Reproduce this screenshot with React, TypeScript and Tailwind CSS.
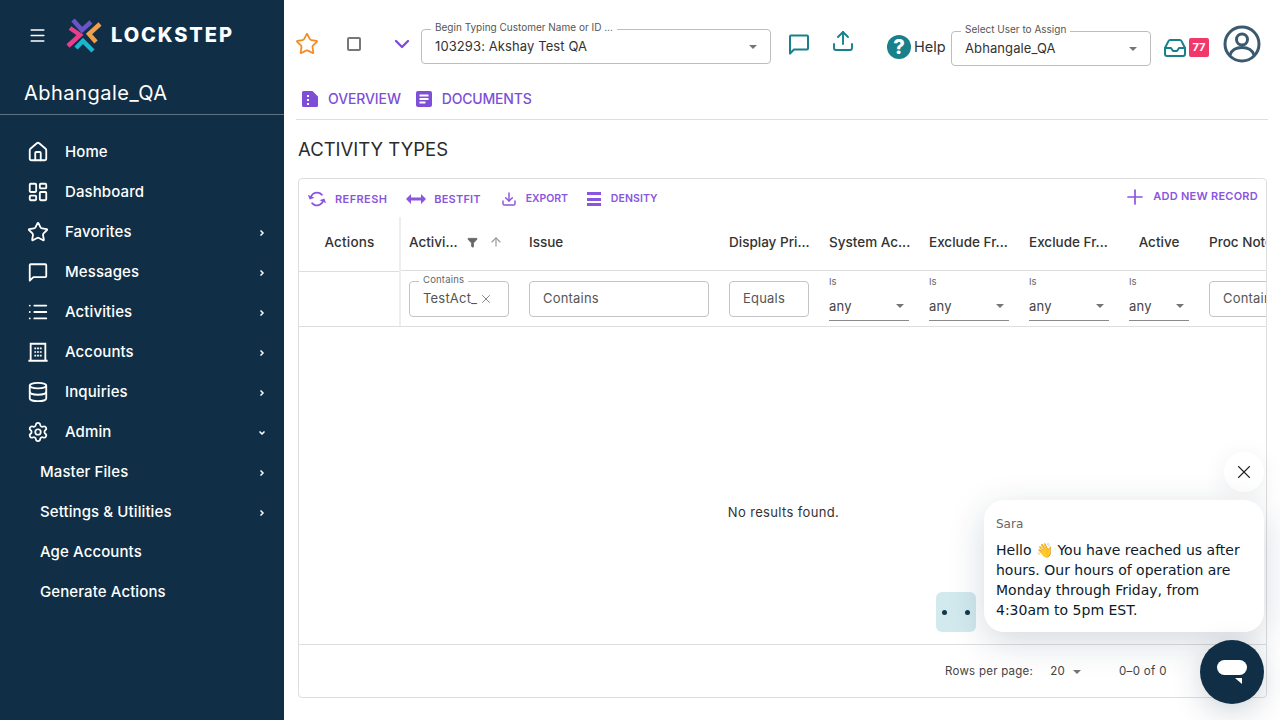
import {
  ArrowUp,
  ChevronDown,
  ChevronRight,
  Database,
  Download,
  Filter,
  Home,
  Inbox,
  LayoutDashboard,
  List,
  Menu,
  Plus,
  Settings,
  Star,
  Upload,
  X,
} from 'lucide-react'
import type { ReactNode } from 'react'

const font = '[font-family:Inter,sans-serif]'

function BubbleIcon({ className }: { className?: string }) {
  return (
    <svg viewBox="0 0 24 24" fill="none" stroke="currentColor" strokeWidth="2" className={className}>
      <path d="M3 4.5a1 1 0 0 1 1-1h16a1 1 0 0 1 1 1v12a1 1 0 0 1-1 1H7l-4 4z" strokeLinejoin="round" />
    </svg>
  )
}

function BuildingIcon({ className }: { className?: string }) {
  return (
    <svg viewBox="0 0 24 24" fill="none" stroke="currentColor" strokeWidth="2" className={className}>
      <path d="M1.5 21.5h21M4 21V3h16v18" />
      <path d="M8 8h2M11 8h2M14 8h2M8 12h2M11 12h2M14 12h2M8 16h2M11 16h2M14 16h2" strokeWidth="1.8" />
    </svg>
  )
}

function Logo() {
  return (
    <svg viewBox="0 0 40 40" fill="none" strokeWidth="4.5" className="h-[40px] w-[40px] shrink-0">
      <path d="M9 5 18 15 27 7" stroke="#6a55c8" />
      <path d="M36 9 25 19 32 27" stroke="#f0a04b" />
      <path d="M6 13 16 20 4 31" stroke="#e83e8c" />
      <path d="M12 33 19 26 29 36" stroke="#1cb5d0" />
    </svg>
  )
}

type NavItem = { label: string; icon?: ReactNode; arrow?: 'right' | 'down' }

const navIcon = 'h-[22px] w-[22px]'

const navItems: NavItem[] = [
  { label: 'Home', icon: <Home className={navIcon} strokeWidth={2} /> },
  { label: 'Dashboard', icon: <LayoutDashboard className={navIcon} strokeWidth={2} /> },
  { label: 'Favorites', icon: <Star className={navIcon} strokeWidth={2} />, arrow: 'right' },
  { label: 'Messages', icon: <BubbleIcon className={navIcon} />, arrow: 'right' },
  { label: 'Activities', icon: <List className={navIcon} strokeWidth={2} />, arrow: 'right' },
  { label: 'Accounts', icon: <BuildingIcon className={navIcon} />, arrow: 'right' },
  { label: 'Inquiries', icon: <Database className={navIcon} strokeWidth={2} />, arrow: 'right' },
  { label: 'Admin', icon: <Settings className="h-[24px] w-[24px]" strokeWidth={1.9} />, arrow: 'down' },
  { label: 'Master Files', arrow: 'right' },
  { label: 'Settings & Utilities', arrow: 'right' },
  { label: 'Age Accounts' },
  { label: 'Generate Actions' },
]

function Sidebar() {
  return (
    <aside className="flex h-full w-[284px] shrink-0 flex-col bg-[#102f46] text-white">
      <div className="flex h-[70px] items-center pl-[28px]">
        <Menu className="h-[19px] w-[19px]" strokeWidth={1.8} />
        <div className="ml-[17px]">
          <Logo />
        </div>
        <span className="ml-[7px] text-[20px] font-extrabold tracking-[1.9px]">LOCKSTEP</span>
      </div>
      <div className="flex h-[45px] items-center border-b border-[#5d7282] pl-[24px] pt-[1px] text-[20px] tracking-[0.5px]">
        Abhangale_QA
      </div>
      <nav className="pt-[17px]">
        {navItems.map((item) => (
          <div key={item.label} className="flex h-[40px] items-center pr-[18px]">
            {item.icon ? (
              <>
                <span className="flex w-[65px] justify-center pl-[11px]">
                  <span className="flex w-[22px] justify-center">{item.icon}</span>
                </span>
                <span className="text-[15px] font-medium tracking-[0.1px]">{item.label}</span>
              </>
            ) : (
              <span className="pl-[40px] text-[15px] font-medium tracking-[0.1px]">{item.label}</span>
            )}
            {item.arrow === 'right' && <ChevronRight className="ml-auto mt-[2px] h-[8px] w-[8px]" strokeWidth={5} />}
            {item.arrow === 'down' && <ChevronDown className="ml-auto mt-[2px] h-[8px] w-[8px]" strokeWidth={5} />}
          </div>
        ))}
      </nav>
    </aside>
  )
}

function Caret({ className = '' }: { className?: string }) {
  return <span className={`h-0 w-0 border-x-[4.5px] border-t-[4.5px] border-x-transparent border-t-[#757575] ${className}`} />
}

function OutlinedSelect({ label, value, className }: { label: string; value: string; className: string }) {
  return (
    <div className={`relative flex h-[35px] shrink-0 items-center rounded-[4px] border border-[#bdbdbd] pl-[13px] pr-[13px] ${className}`}>
      <span className="absolute -top-[9px] left-[9px] whitespace-nowrap bg-white px-[4px] text-[10px] leading-[12px] text-[#555]">
        {label}
      </span>
      <span className="text-[13px] tracking-[0.1px] text-[#333]">{value}</span>
      <Caret className="ml-auto" />
    </div>
  )
}

function TopBar() {
  return (
    <div className="flex h-[84px] items-start">
      <Star className="-ml-px mt-[32px] h-[24px] w-[24px] shrink-0 text-[#f28c28]" strokeWidth={1.8} />
      <span className="ml-[28px] mt-[37px] h-[14px] w-[14px] shrink-0 rounded-[2px] border-2 border-[#777]" />
      <ChevronDown className="ml-[29px] mt-[32px] h-[24px] w-[24px] shrink-0 text-[#7e4fd6]" strokeWidth={2.4} />
      <div className="ml-[7px] mt-[29px]">
        <OutlinedSelect label="Begin Typing Customer Name or ID ..." value="103293: Akshay Test QA" className="w-[350px]" />
      </div>
      <BubbleIcon className="ml-[16px] mt-[32px] h-[24px] w-[24px] shrink-0 text-[#17808a]" />
      <Upload className="ml-[20px] mt-[29px] h-[24px] w-[24px] shrink-0 text-[#17808a]" strokeWidth={1.9} />
      <span className="ml-[32px] mt-[35px] flex h-[24px] w-[24px] shrink-0 items-center justify-center rounded-full bg-[#17808a] text-[20px] font-extrabold leading-none text-white">
        ?
      </span>
      <span className="ml-[3px] mt-[37px] w-[31px] text-[14.5px] leading-[20px] text-[#333]">Help</span>
      <div className="ml-[6px] mt-[31px]">
        <OutlinedSelect label="Select User to Assign" value="Abhangale_QA" className="w-[200px]" />
      </div>
      <Inbox className="ml-[12px] mt-[36px] h-[24px] w-[24px] shrink-0 text-[#17808a]" strokeWidth={2} />
      <span className="ml-[2px] mt-[38px] flex h-[19px] w-[20px] shrink-0 items-center justify-center rounded-[2px] bg-[#f0386b] text-[11px] font-bold text-white">
        77
      </span>
      <svg viewBox="0 0 38 38" fill="none" stroke="#3b5a70" strokeWidth="3" className="ml-[14px] mt-[25px] h-[38px] w-[38px] shrink-0">
        <circle cx="19" cy="19" r="17" />
        <circle cx="19" cy="14.5" r="5.5" />
        <path d="M7 30c2-6 7-7.5 12-7.5S29 24 31 30" />
      </svg>
    </div>
  )
}

function Tabs() {
  return (
    <div className="flex h-[36px] items-start border-b border-[#dedede] pl-[6px] pt-[6px] text-[14px] font-medium leading-[18px] text-[#7e4fd6]">
      <svg viewBox="0 0 16 16" className="mt-px h-[16px] w-[16px] shrink-0">
        <path d="M1.500 0H10.500L16 5.500V14.500A1.500 1.500 0 0 1 14.500 16H1.500A1.500 1.500 0 0 1 0 14.500V1.500A1.500 1.500 0 0 1 1.500 0Z" fill="#7e4fd6" />
        <path d="M5 4h2v2H5zM5 8h2v2H5zM5 12h2v2H5z" fill="#fff" />
      </svg>
      <span className="ml-[10px] tracking-[-0.1px]">OVERVIEW</span>
      <svg viewBox="0 0 16 16" className="ml-[15px] mt-px h-[16px] w-[16px] shrink-0">
        <rect width="16" height="16" rx="2" fill="#7e4fd6" />
        <path d="M3.500 3.500h9v2h-9zM3.500 7h9v2h-9zM3.500 10.500h6v2h-6z" fill="#fff" />
      </svg>
      <span className="ml-[10px] tracking-[-0.2px]">DOCUMENTS</span>
    </div>
  )
}

function ToolButton({ icon, label, className = '' }: { icon: ReactNode; label: string; className?: string }) {
  return (
    <div className={`flex items-center font-semibold text-[#8a55e0] ${className}`}>
      {icon}
      <span>{label}</span>
    </div>
  )
}

function Toolbar() {
  return (
    <div className="flex h-[38px] shrink-0 items-center pl-[7px] pr-[8px] pt-[2px]">
      <ToolButton
        className="text-[11px] tracking-[0.4px]"
        icon={
          <svg viewBox="0 0 24 24" fill="#8a55e0" className="mr-[7px] h-[22px] w-[22px] rotate-[25deg]">
            <path d="M19 8l-4 4h3c0 3.310-2.690 6-6 6-1.010 0-1.970-.25-2.800-.7l-1.460 1.460C8.970 19.540 10.430 20 12 20c4.420 0 8-3.580 8-8h3l-4-4zM6 12c0-3.310 2.690-6 6-6 1.010 0 1.970.25 2.800.7l1.460-1.460C15.030 4.460 13.570 4 12 4c-4.420 0-8 3.580-8 8H1l4 4 4-4H6z" />
          </svg>
        }
        label="REFRESH"
      />
      <ToolButton
        className="ml-[19px] text-[11px] tracking-[0.2px]"
        icon={
          <svg viewBox="0 0 20 12" fill="#8a55e0" className="mr-[8px] h-[12px] w-[20px]">
            <path d="M0 6 5 1v3.5h10V1l5 5-5 5V7.500H5V11z" />
          </svg>
        }
        label="BESTFIT"
      />
      <ToolButton
        className="ml-[20px] text-[10.5px] tracking-[-0.1px]"
        icon={<Download className="mr-[9px] h-[16px] w-[16px]" strokeWidth={2.2} />}
        label="EXPORT"
      />
      <ToolButton
        className="ml-[19px] text-[10.5px] tracking-[0.1px]"
        icon={
          <span className="mr-[10px] flex h-[14px] w-[14px] flex-col justify-between">
            <span className="h-[3px] bg-[#8a55e0]" />
            <span className="h-[3px] bg-[#8a55e0]" />
            <span className="h-[3px] bg-[#8a55e0]" />
          </span>
        }
        label="DENSITY"
      />
      <ToolButton
        className="mb-[5px] ml-auto text-[11px] tracking-[0.25px]"
        icon={<Plus className="mr-[6px] h-[24px] w-[24px]" strokeWidth={1.7} />}
        label="ADD NEW RECORD"
      />
    </div>
  )
}

function HeaderCell({ label, className }: { label: string; className: string }) {
  return <div className={`shrink-0 overflow-hidden whitespace-nowrap pl-[10px] ${className}`}>{label}</div>
}

function InputFilter({ value, className }: { value: string; className: string }) {
  return (
    <div className={`mt-[10px] flex h-[36px] shrink-0 items-center overflow-hidden rounded-[4px] border border-[#c4c4c4] pl-[13px] text-[13px] tracking-[0.2px] text-[#555] ${className}`}>
      {value}
    </div>
  )
}

function IsFilter({ className }: { className: string }) {
  return (
    <div className={`ml-[20px] shrink-0 pt-[5px] ${className}`}>
      <div className="text-[9.5px] leading-[12px] text-[#666]">Is</div>
      <div className="mt-[9px] flex h-[24px] items-start border-b border-[#8a8a8a] text-[13px] tracking-[0.2px] text-[#444]">
        <span className="leading-[18px]">any</span>
        <Caret className="ml-auto mr-[5px] mt-[7px]" />
      </div>
    </div>
  )
}

function DataGrid() {
  return (
    <div className="flex min-h-0 flex-1 flex-col overflow-hidden rounded-[4px] border border-[#dedede] text-[#333]">
      <Toolbar />
      <div className="flex h-[110px] shrink-0 border-b border-[#dedede]">
        <div className="w-[102px] shrink-0 border-r-2 border-[#eeeeee]">
          <div className="flex h-[55px] items-center justify-center border-b border-[#dedede] pb-[3px] pl-[1px] text-[13.5px] font-medium tracking-[0.2px]">
            Actions
          </div>
        </div>
        <div className="min-w-0 flex-1 overflow-hidden">
          <div className="flex h-[54px] w-[1000px] items-center border-b border-[#dedede] pb-[3px] text-[13.5px] font-medium">
            <div className="flex w-[118px] shrink-0 items-center pl-[8px]">
              <span>Activi...</span>
              <Filter className="ml-[9px] h-[11px] w-[11px] fill-[#666] text-[#666]" />
              <ArrowUp className="ml-[11px] h-[14px] w-[14px] text-[#999]" strokeWidth={2} />
            </div>
            <HeaderCell label="Issue" className="w-[200px]" />
            <HeaderCell label="Display Pri..." className="w-[100px]" />
            <HeaderCell label="System Ac..." className="w-[100px]" />
            <HeaderCell label="Exclude Fr..." className="w-[100px]" />
            <HeaderCell label="Exclude Fr..." className="w-[100px]" />
            <div className="flex w-[80px] shrink-0 justify-center">Active</div>
            <HeaderCell label="Proc Notes" className="w-[100px]" />
          </div>
          <div className="flex h-[55px] w-[1000px] items-start">
            <div className="relative ml-[8px] mt-[10px] flex h-[36px] w-[100px] shrink-0 items-center rounded-[4px] border border-[#c4c4c4] pl-[13px] text-[13px] tracking-[0.2px] text-[#555]">
              <span className="absolute -top-[8px] left-[9px] bg-white px-[4px] text-[9.5px] leading-[12px] text-[#666]">Contains</span>
              TestAct_
              <X className="ml-[2px] h-[14px] w-[14px] text-[#777]" strokeWidth={1.5} />
            </div>
            <InputFilter value="Contains" className="ml-[20px] w-[180px]" />
            <InputFilter value="Equals" className="ml-[20px] w-[80px]" />
            <IsFilter className="w-[80px]" />
            <IsFilter className="w-[80px]" />
            <IsFilter className="w-[80px]" />
            <IsFilter className="w-[60px]" />
            <InputFilter value="Contains" className="ml-[20px] w-[80px]" />
          </div>
        </div>
      </div>
      <div className="flex-1 pl-[2px] pt-[176px] text-center text-[13px] tracking-[0.35px] text-[#333]">No results found.</div>
      <div className="flex h-[53px] shrink-0 items-center border-t border-[#dedede] pl-[646px] pt-[2px] text-[11.5px] tracking-[0.25px] text-[#444]">
        <span>Rows per page:</span>
        <span className="ml-[17px]">20</span>
        <Caret className="ml-[8px]" />
        <span className="ml-[38px] tracking-[0.35px]">0–0 of 0</span>
      </div>
    </div>
  )
}

function ChatWidget() {
  const chatFont = '[font-family:"DejaVu_Sans",sans-serif]'
  return (
    <>
      <div className="absolute left-[1224px] top-[452px] flex h-[40px] w-[40px] items-center justify-center rounded-full bg-white shadow-[0_4px_24px_rgba(16,47,70,0.08)]">
        <X className="h-[22px] w-[22px] text-[#222]" strokeWidth={1.2} />
      </div>
      <div className="absolute left-[936px] top-[592px] flex h-[40px] w-[40px] items-center justify-center gap-[18px] rounded-[6px] bg-[#d2e9ee]">
        <span className="h-[5px] w-[5px] rounded-full bg-[#0f3a4a]" />
        <span className="h-[5px] w-[5px] rounded-full bg-[#0f3a4a]" />
      </div>
      <div className={`absolute left-[984px] top-[500px] h-[132px] w-[280px] rounded-[20px] bg-white pl-[12px] pr-[10px] pt-[16px] shadow-[0_10px_36px_rgba(16,47,70,0.18)] ${chatFont}`}>
        <div className="text-[12px] leading-[16px] text-[#666]">Sara</div>
        <div className="mt-[8px] text-[14px] leading-[20px] text-[#0c1a2b]">
          Hello 👋 You have reached us after hours. Our hours of operation are Monday through Friday, from 4:30am to 5pm EST.
        </div>
      </div>
      <div className="absolute left-[1200px] top-[640px] flex h-[64px] w-[64px] items-center justify-center rounded-full bg-[#102f46] shadow-[0_8px_30px_rgba(16,47,70,0.2)]">
        <svg viewBox="0 0 30 24" className="h-[24px] w-[30px]">
          <rect x="0" y="0" width="30" height="15" rx="7.500" fill="#fff" />
          <path d="M18 18h7v6z" fill="#fff" />
        </svg>
      </div>
    </>
  )
}

export default function App() {
  return (
    <div className={`relative flex h-[720px] w-[1280px] overflow-hidden bg-white ${font}`}>
      <Sidebar />
      <main className="flex min-w-0 flex-1 flex-col pb-[22px] pl-[12px] pr-[12px]">
        <TopBar />
        <Tabs />
        <h1 className="ml-[2px] flex h-[58px] shrink-0 items-center pt-[1px] text-[18.5px] font-normal text-[#2b2b2b]">ACTIVITY TYPES</h1>
        <div className="ml-[2px] mr-px flex min-h-0 flex-1 flex-col">
          <DataGrid />
        </div>
      </main>
      <ChatWidget />
    </div>
  )
}
